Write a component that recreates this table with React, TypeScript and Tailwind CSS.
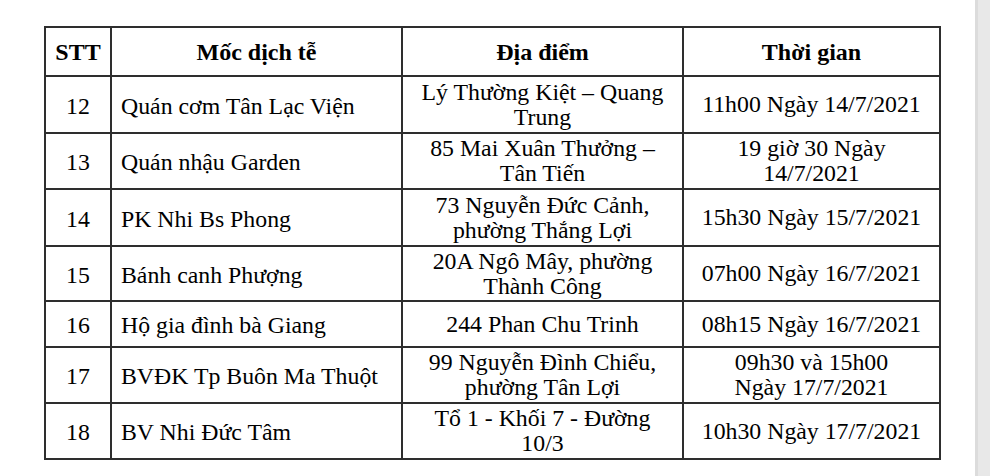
import React from "react";

const rows: { stt: string; moc: string; dia: React.ReactNode; time: React.ReactNode; h: string }[] = [
  { stt: "12", moc: "Quán cơm Tân Lạc Viện", dia: <>Lý Thường Kiệt – Quang<br />Trung</>, time: "11h00 Ngày 14/7/2021", h: "h-[57px]" },
  { stt: "13", moc: "Quán nhậu Garden", dia: <>85 Mai Xuân Thưởng –<br />Tân Tiến</>, time: <>19 giờ 30 Ngày<br />14/7/2021</>, h: "h-[56px]" },
  { stt: "14", moc: "PK Nhi Bs Phong", dia: <>73 Nguyễn Đức Cảnh,<br />phường Thắng Lợi</>, time: "15h30 Ngày 15/7/2021", h: "h-[57px]" },
  { stt: "15", moc: "Bánh canh Phượng", dia: <>20A Ngô Mây, phường<br />Thành Công</>, time: "07h00 Ngày 16/7/2021", h: "h-[55px]" },
  { stt: "16", moc: "Hộ gia đình bà Giang", dia: "244 Phan Chu Trinh", time: "08h15 Ngày 16/7/2021", h: "h-[46px]" },
  { stt: "17", moc: "BVĐK Tp Buôn Ma Thuột", dia: <>99 Nguyễn Đình Chiểu,<br />phường Tân Lợi</>, time: <>09h30 và 15h00<br />Ngày 17/7/2021</>, h: "h-[56px]" },
  { stt: "18", moc: "BV Nhi Đức Tâm", dia: <>Tổ 1 - Khối 7 - Đường<br />10/3</>, time: "10h30 Ngày 17/7/2021", h: "h-[56px]" },
];

export default function App() {
  const cell = "border-2 border-[#2e2e2e] p-0 align-middle";
  return (
    <div className="flex w-[990px] h-[476px] bg-white overflow-hidden font-['Liberation_Serif','Times_New_Roman',serif]">
      <div className="flex-1 pt-[26px] pl-[44px]">
        <table className="table-fixed border-collapse w-[895px] text-black text-[23.8px] leading-[25px]">
          <colgroup>
            <col className="w-[66px]" />
            <col className="w-[291px]" />
            <col className="w-[281px]" />
            <col className="w-[257px]" />
          </colgroup>
          <thead>
            <tr className="h-[49px] font-bold text-[24px]">
              <th className={`${cell} text-center pt-[2px]`}>STT</th>
              <th className={`${cell} text-center pt-[2px]`}>Mốc dịch tễ</th>
              <th className={`${cell} text-center pt-[2px]`}>Địa điểm</th>
              <th className={`${cell} text-center pt-[2px]`}>Thời gian</th>
            </tr>
          </thead>
          <tbody>
            {rows.map((r) => (
              <tr key={r.stt} className={r.h}>
                <td className={`${cell} text-center pt-[3px]`}>{r.stt}</td>
                <td className={`${cell} text-left pl-[9px] pt-[3px]`}>{r.moc}</td>
                <td className={`${cell} text-center`}>{r.dia}</td>
                <td className={`${cell} text-center`}>{r.time}</td>
              </tr>
            ))}
          </tbody>
        </table>
      </div>
      <div className="w-[15px] h-full bg-[#e8e8e8] border-l-[3px] border-[#dcdcdc]" />
    </div>
  );
}
